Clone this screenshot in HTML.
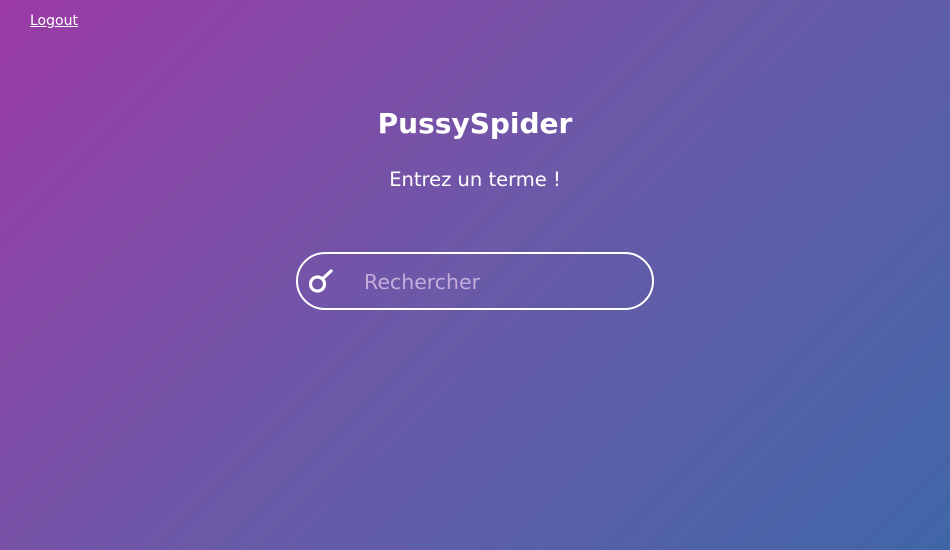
<!DOCTYPE html>
<html><head><style>
html,body{margin:0;width:950px;height:550px;overflow:hidden}
body{background:linear-gradient(135deg,#9b3aa5 0%,#6a5aa8 50%,#4066a8 100%);font-family:"DejaVu Sans","Liberation Sans",sans-serif;color:#fff;position:relative}
a{position:absolute;left:30px;top:13px;font-size:14px;color:#fff;text-decoration:underline}
h1{position:absolute;top:107px;left:0;width:950px;text-align:center;margin:0;font-size:28px;font-weight:bold}
p{position:absolute;top:168px;left:0;width:950px;text-align:center;margin:0;font-size:19.5px}
.box{position:absolute;left:296px;top:252px;width:354px;height:54px;border:2.5px solid #fff;border-radius:30px}
.ph{position:absolute;left:66px;top:16px;font-size:20.5px;color:#c4acdd}
svg{position:absolute;left:0;top:0}
</style></head><body>
<a>Logout</a>
<h1>PussySpider</h1>
<p>Entrez un terme !</p>
<div class="box"><svg width="60" height="55"><circle cx="19.5" cy="30" r="7" fill="none" stroke="#fff" stroke-width="3.2"/><line x1="26" y1="23.5" x2="33" y2="17" stroke="#fff" stroke-width="3.2" stroke-linecap="round"/></svg><span class="ph">Rechercher</span></div>
</body></html>
